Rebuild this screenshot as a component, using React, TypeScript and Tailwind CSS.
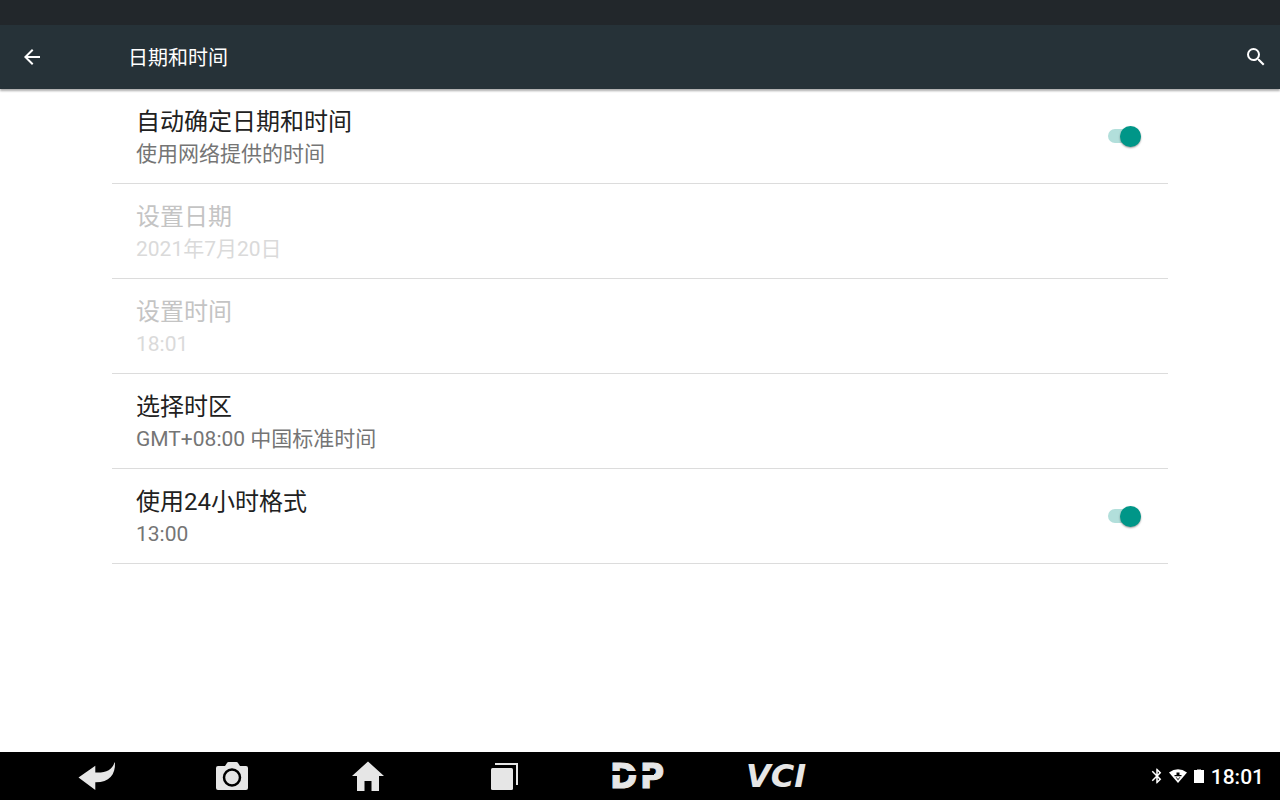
import { MdArrowBack, MdBluetooth, MdSearch } from 'react-icons/md';

type Setting = {
  id: string;
  title: string;
  summary: string;
  disabled?: boolean;
  toggle?: boolean;
};

const settings: Setting[] = [
  { id: 'auto-time', title: '自动确定日期和时间', summary: '使用网络提供的时间', toggle: true },
  { id: 'date', title: '设置日期', summary: '2021年7月20日', disabled: true },
  { id: 'time', title: '设置时间', summary: '18:01', disabled: true },
  { id: 'zone', title: '选择时区', summary: 'GMT+08:00 中国标准时间' },
  { id: 'format', title: '使用24小时格式', summary: '13:00', toggle: true },
];

const rowClass = 'flex w-full items-center justify-between border-b border-[#dcdcdc] px-6 py-[13px] text-left';

function RowText({ title, summary, disabled }: Setting) {
  return (
    <span className="block pt-1">
      <span className={`block text-[24px] leading-8 ${disabled ? 'text-[#c4c4c4]' : 'text-[#212121]'}`}>{title}</span>
      <span className={`block text-[21px] leading-8 ${disabled ? 'text-[#dadada]' : 'text-[#757575]'}`}>{summary}</span>
    </span>
  );
}

function SettingRow(setting: Setting) {
  if (setting.toggle) {
    return (
      <label htmlFor={setting.id} className={rowClass}>
        <RowText {...setting} />
        <span className="relative mr-[3px] flex h-[21px] w-[33px] items-center">
          <input id={setting.id} type="checkbox" role="switch" defaultChecked className="peer h-3.5 w-full appearance-none rounded-full bg-gray-300 checked:bg-[#b2dfdb]" />
          <span className="pointer-events-none absolute top-0 left-0 size-[21px] rounded-full bg-gray-50 shadow-[0_1px_2px_rgba(0,0,0,0.4)] peer-checked:left-3 peer-checked:bg-[#009688]" />
        </span>
      </label>
    );
  }
  return (
    <button type="button" disabled={setting.disabled} className={rowClass}>
      <RowText {...setting} />
    </button>
  );
}

function NavIcon({ name }: { name: string }) {
  switch (name) {
    case 'back':
      return (
        <svg viewBox="0 0 40 30" className="h-[30px] w-10" fill="currentColor">
          <path d="M2.500 16.500L19.300 4.700v6.800C30 12 36 9 38.500 1.500h.500C39.500 14 33 21.500 19.300 21.300v7.700z" />
        </svg>
      );
    case 'camera':
      return (
        <svg viewBox="0 0 32 30" className="h-[30px] w-8" fill="currentColor">
          <path d="M2 5h7l2-3q.5-1 1.500-1h8q1 0 1.500 1l2 3h6q2 0 2 2v20q0 2-2 2H2q-2 0-2-2V7q0-2 2-2z" />
          <circle cx="16" cy="16.500" r="8" fill="none" stroke="#000" strokeWidth="2.500" />
        </svg>
      );
    case 'home':
      return (
        <svg viewBox="0 0 32 30" className="h-[30px] w-8" fill="currentColor">
          <path d="M16 0.500L32 15h-5v15h-7.500V20h-7v10H5V15H0z" />
        </svg>
      );
    case 'recent':
      return (
        <svg viewBox="0 0 28 28" className="size-7" fill="currentColor">
          <rect x="1" y="6" width="22" height="22" rx="1.500" />
          <path d="M5 1h23v22h-2V3H5z" />
        </svg>
      );
    case 'dp':
      return (
        <svg viewBox="0 0 60 44" className="h-11 w-[60px]" fill="currentColor">
          <text y="34" fontSize="33" fontWeight="700" fontFamily="DejaVu Sans, sans-serif" stroke="currentColor" strokeWidth="1">
            <tspan x="0">D</tspan>
            <tspan x="30">P</tspan>
          </text>
          <rect x="0" y="17" width="44" height="4" fill="#000" />
        </svg>
      );
    default:
      return <span className="font-['DejaVu_Sans',sans-serif] text-[32px] leading-10 font-bold italic">VCI</span>;
  }
}

const navItems = [
  { name: 'back', label: '返回' },
  { name: 'camera', label: '截屏' },
  { name: 'home', label: '主页' },
  { name: 'recent', label: '最近任务' },
  { name: 'dp', label: 'DP' },
  { name: 'vci', label: 'VCI' },
];

export default function App() {
  return (
    <div className="flex min-h-screen flex-col bg-white font-[Roboto,'Noto_Sans_CJK_SC',sans-serif]" lang="zh-CN">
      <div className="h-[25px] bg-[#22272b]" />
      <header className="flex h-16 items-center bg-[#263238] text-white shadow-[0_2px_2px_rgba(0,0,0,0.32)]">
        <button type="button" aria-label="返回" className="ml-5">
          <MdArrowBack className="size-6" />
        </button>
        <h1 className="ml-[84px] pt-0.5 text-[20px] leading-8">日期和时间</h1>
        <button type="button" aria-label="搜索" className="mr-3 ml-auto">
          <MdSearch className="size-6" />
        </button>
      </header>

      <main className="mx-28 grow">
        {settings.map((setting) => (
          <SettingRow key={setting.id} {...setting} />
        ))}
      </main>

      <footer className="flex h-12 items-center justify-between bg-black pr-4 pl-7">
        <nav className="flex">
          {navItems.map((item) => (
            <button key={item.name} type="button" aria-label={item.label} className="flex h-12 w-[136px] items-center justify-center text-[#e6e6e6]">
              <NavIcon name={item.name} />
            </button>
          ))}
        </nav>
        <div className="flex items-center text-white">
          <MdBluetooth className="size-[18px]" />
          <svg viewBox="0 0 18 14" className="ml-[3px] h-3.5 w-[18px]" fill="currentColor">
            <path d="M0 3.500Q9-3 18 3.500L9 14z" />
            <path d="M7.500 3.500h3v2.500h2v1.200h-7V6h2z" fill="#000" />
            <path d="M6.500 8.200h1.500v1h2v-1h1.500L9 11.500z" fill="#000" fillOpacity=".7" />
          </svg>
          <svg viewBox="0 0 10 15" className="ml-[7px] h-[15px] w-2.5" fill="currentColor">
            <path d="M3 0h4v1H3z" fillOpacity=".5" />
            <rect y="1" width="10" height="13" />
          </svg>
          <span className="ml-[7px] pt-0.5 text-[21px] leading-6 font-medium">18:01</span>
        </div>
      </footer>
    </div>
  );
}
